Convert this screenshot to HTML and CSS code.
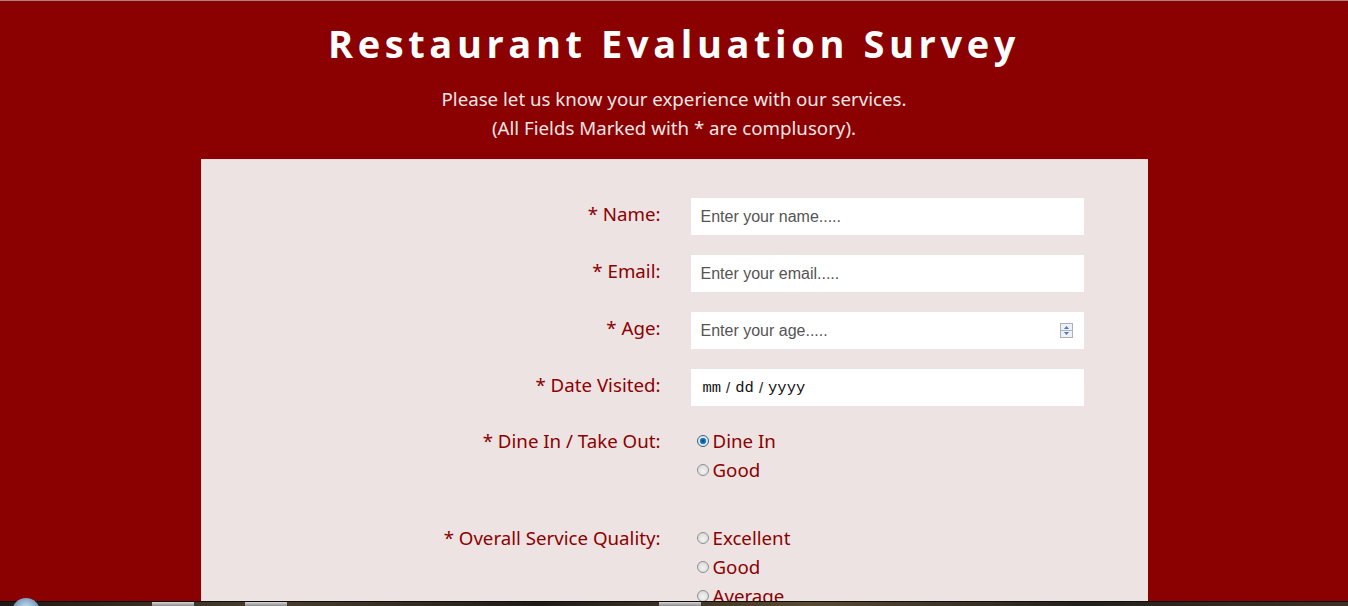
FILE: index.html
```html
<!DOCTYPE html>
<html lang="en">
<head>
<meta charset="utf-8">
<title>Restaurant Evaluation Survey</title>
<link rel="stylesheet" href="styles.css">
</head>
<body>
<header class="hero">
  <h1 class="hero-title">Restaurant Evaluation Survey</h1>
  <p class="hero-intro">Please let us know your experience with our services.<br>(All Fields Marked with * are complusory).</p>
</header>
<main class="card">
  <form class="survey">
    <label class="survey-label" for="name">* Name:</label>
    <div class="field"><input class="field-input" id="name" type="text" placeholder="Enter your name....."></div>

    <label class="survey-label" for="email">* Email:</label>
    <div class="field"><input class="field-input" id="email" type="email" placeholder="Enter your email....."></div>

    <label class="survey-label" for="age">* Age:</label>
    <div class="field">
      <input class="field-input" id="age" type="text" placeholder="Enter your age.....">
      <span class="spinner" aria-hidden="true">
        <svg width="13" height="15" viewBox="0 0 13 15">
          <rect x="0.5" y="0.5" width="12" height="14" fill="#eef0f4" stroke="#a9b1bd"/>
          <line x1="1" y1="7.5" x2="12" y2="7.5" stroke="#a9b1bd"/>
          <path d="M4 6 L6.5 3 L9 6 Z" fill="#4a78c0"/>
          <path d="M4 9 L6.5 12 L9 9 Z" fill="#4a78c0"/>
        </svg>
      </span>
    </div>

    <label class="survey-label" for="date">* Date Visited:</label>
    <div class="field field-date" id="date"><span class="mono">mm</span><span class="sep">/</span><span class="mono">dd</span><span class="sep">/</span><span class="mono">yyyy</span></div>

    <span class="survey-label survey-label-group">* Dine In / Take Out:</span>
    <div class="options options-dine">
      <label class="option"><input class="radio" type="radio" name="dine" checked> Dine In</label>
      <label class="option"><input class="radio" type="radio" name="dine"> Good</label>
    </div>

    <span class="survey-label survey-label-group">* Overall Service Quality:</span>
    <div class="options">
      <label class="option"><input class="radio" type="radio" name="quality"> Excellent</label>
      <label class="option"><input class="radio" type="radio" name="quality"> Good</label>
      <label class="option"><input class="radio" type="radio" name="quality"> Average</label>
      <label class="option"><input class="radio" type="radio" name="quality"> Poor</label>
    </div>
  </form>
</main>
<div class="taskbar" aria-hidden="true">
  <span class="taskbar-orb"></span>
  <span class="taskbar-btn taskbar-btn-1"></span>
  <span class="taskbar-btn taskbar-btn-2"></span>
  <span class="taskbar-btn taskbar-btn-3"></span>
</div>
</body>
</html>
```
FILE: styles.css
```css
html, body {
  margin: 0;
  padding: 0;
  overflow: hidden;
}
body {
  background: #8b0000;
  font-family: "Noto Sans", "Open Sans", sans-serif;
  border-top: 1px solid #b08080;
  height: 605px;
}
.hero {
  text-align: center;
  padding-top: 18px;
  padding-bottom: 17px;
}
.hero-title {
  margin: 0;
  color: #ffffff;
  font-family: "Open Sans", sans-serif;
  font-weight: 700;
  font-size: 38px;
  line-height: 48px;
  letter-spacing: 4.6px;
}
.hero-intro {
  margin: 17px 0 0;
  color: #f3e6e6;
  font-size: 18.7px;
  line-height: 29px;
}
.card {
  width: 947px;
  margin: 0 auto;
  background: #eee3e3;
  box-shadow: inset 1px 1px 0 #f6d9d9;
  padding: 39px 0 0 1px;
  height: 600px;
  box-sizing: border-box;
}
.survey {
  display: grid;
  grid-template-columns: 459px 393px;
  column-gap: 30px;
  row-gap: 20px;
  align-items: start;
}
.survey-label {
  text-align: right;
  color: #8b0000;
  font-size: 18.7px;
  line-height: 29px;
  padding-top: 1px;
}
.survey-label-group {
  padding-top: 0;
}
.field {
  display: flex;
  align-items: center;
  height: 37px;
  background: #ffffff;
  box-sizing: border-box;
  padding: 0 11px 0 10px;
}
.field-input {
  flex: 1;
  border: 0;
  outline: 0;
  background: transparent;
  font-family: "Liberation Sans", Arial, sans-serif;
  font-size: 16px;
  color: #333;
  padding: 0;
  height: 37px;
}
.field-input::placeholder {
  color: #555555;
}
.spinner {
  display: flex;
}
.field-date {
  padding-left: 12px;
  gap: 5px;
  color: #111;
}
.mono {
  font-family: "Liberation Mono", "Courier New", monospace;
  font-size: 15.5px;
}
.sep {
  font-family: "Liberation Sans", sans-serif;
  font-size: 15px;
  color: #222;
}
.options {
  display: flex;
  flex-direction: column;
  margin-left: 6px;
}
.options-dine {
  margin-bottom: 19px;
}
.option {
  display: flex;
  align-items: center;
  gap: 4px;
  color: #8b0000;
  font-size: 18.7px;
  line-height: 29px;
}
.radio {
  appearance: none;
  -webkit-appearance: none;
  margin: 1px 0 0 0;
  width: 12px;
  height: 12px;
  border-radius: 50%;
  border: 1px solid #8e8f8f;
  background: radial-gradient(circle at 50% 60%, #f4f4f4 0, #dcdcdc 70%, #cfcfcf 100%);
  box-sizing: border-box;
}
.radio:checked {
  background: radial-gradient(circle at 50% 50%, #0d3f6e 0, #1b7fc4 2.5px, #2c8fd0 3px, #e8eef4 3.6px, #d8d8d8 100%);
  border-color: #3c5f80;
}
.taskbar {
  position: fixed;
  left: 0;
  right: 0;
  bottom: 0;
  height: 4px;
  background: linear-gradient(90deg, #1d1a16 0, #4a3f2c 20%, #1e1b17 40%, #5a4b32 60%, #22201c 80%, #3b3226 100%);
  border-top: 1px solid #0d0d0d;
}
.taskbar-orb {
  position: absolute;
  left: 12px;
  top: -4px;
  width: 28px;
  height: 28px;
  border-radius: 50%;
  background: radial-gradient(circle at 50% 40%, #d9e6f2 0, #8fb0d0 40%, #3a5a7a 100%);
}
.taskbar-btn {
  position: absolute;
  top: 0;
  height: 4px;
  width: 42px;
  background: linear-gradient(#d8d8d8, #8a8a8a);
}
.taskbar-btn-1 { left: 152px; }
.taskbar-btn-2 { left: 245px; }
.taskbar-btn-3 { left: 659px; }
```
